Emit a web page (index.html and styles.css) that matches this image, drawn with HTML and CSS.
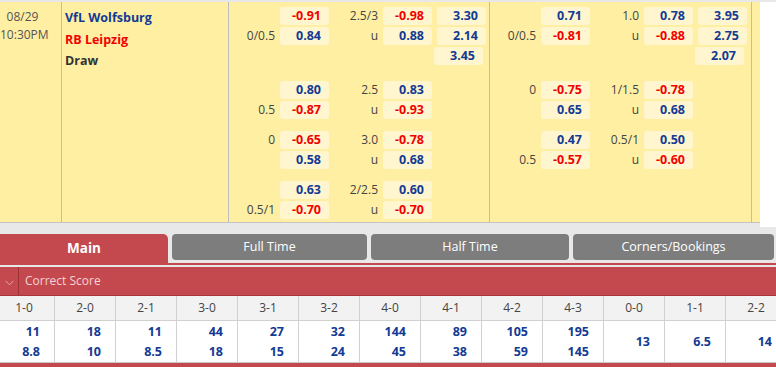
FILE: index.html
```html
<!DOCTYPE html>
<html>
<head>
<meta charset="utf-8">
<link rel="stylesheet" href="styles.css">
</head>
<body>
<div class="page">
  <div class="top">
    <div class="match">
      <div class="col date">
        <div>08/29</div>
        <div>10:30PM</div>
      </div>
      <div class="col teams">
        <div class="home">VfL Wolfsburg</div>
        <div class="away">RB Leipzig</div>
        <div class="draw">Draw</div>
      </div>
      <div class="col odds">
        <div class="grp g1">
          <div class="line"><span class="hl"></span><span class="bx r">-0.91</span><span class="hl">2.5/3</span><span class="bx r">-0.98</span><span class="bx b x">3.30</span></div>
          <div class="line"><span class="hl">0/0.5</span><span class="bx b">0.84</span><span class="hl">u</span><span class="bx b">0.88</span><span class="bx b x">2.14</span></div>
          <div class="line"><span class="hl"></span><span class="no"></span><span class="hl"></span><span class="no"></span><span class="bx b x">3.45</span></div>
        </div>
        <div class="grp">
          <div class="line"><span class="hl"></span><span class="bx b">0.80</span><span class="hl">2.5</span><span class="bx b">0.83</span></div>
          <div class="line"><span class="hl">0.5</span><span class="bx r">-0.87</span><span class="hl">u</span><span class="bx r">-0.93</span></div>
        </div>
        <div class="grp">
          <div class="line"><span class="hl">0</span><span class="bx r">-0.65</span><span class="hl">3.0</span><span class="bx r">-0.78</span></div>
          <div class="line"><span class="hl"></span><span class="bx b">0.58</span><span class="hl">u</span><span class="bx b">0.68</span></div>
        </div>
        <div class="grp">
          <div class="line"><span class="hl"></span><span class="bx b">0.63</span><span class="hl">2/2.5</span><span class="bx b">0.60</span></div>
          <div class="line"><span class="hl">0.5/1</span><span class="bx r">-0.70</span><span class="hl">u</span><span class="bx r">-0.70</span></div>
        </div>
      </div>
      <div class="col odds ht">
        <div class="grp g1">
          <div class="line"><span class="hl"></span><span class="bx b">0.71</span><span class="hl">1.0</span><span class="bx b">0.78</span><span class="bx b x">3.95</span></div>
          <div class="line"><span class="hl">0/0.5</span><span class="bx r">-0.81</span><span class="hl">u</span><span class="bx r">-0.88</span><span class="bx b x">2.75</span></div>
          <div class="line"><span class="hl"></span><span class="no"></span><span class="hl"></span><span class="no"></span><span class="bx b x">2.07</span></div>
        </div>
        <div class="grp">
          <div class="line"><span class="hl">0</span><span class="bx r">-0.75</span><span class="hl">1/1.5</span><span class="bx r">-0.78</span></div>
          <div class="line"><span class="hl"></span><span class="bx b">0.65</span><span class="hl">u</span><span class="bx b">0.68</span></div>
        </div>
        <div class="grp">
          <div class="line"><span class="hl"></span><span class="bx b">0.47</span><span class="hl">0.5/1</span><span class="bx b">0.50</span></div>
          <div class="line"><span class="hl">0.5</span><span class="bx r">-0.57</span><span class="hl">u</span><span class="bx r">-0.60</span></div>
        </div>
      </div>
      <div class="col extra"></div>
    </div>
    <div class="side"></div>
  </div>

  <div class="tabs">
    <div class="tab active">Main</div>
    <div class="tab t2">Full Time</div>
    <div class="tab t3">Half Time</div>
    <div class="tab t4">Corners/Bookings</div>
  </div>

  <div class="sec-head">
    <span class="chev"><svg width="9" height="6" viewBox="0 0 9 6"><path d="M0.5 0.8 L4.5 4.8 L8.5 0.8" fill="none" stroke="#e7a6aa" stroke-width="1"/></svg></span>
    <span class="sec-title">Correct Score</span>
  </div>

  <div class="scores">
    <div class="sc"><div class="sh">1-0</div><div class="sv"><span>11</span><span>8.8</span></div></div>
    <div class="sc"><div class="sh">2-0</div><div class="sv"><span>18</span><span>10</span></div></div>
    <div class="sc"><div class="sh">2-1</div><div class="sv"><span>11</span><span>8.5</span></div></div>
    <div class="sc"><div class="sh">3-0</div><div class="sv"><span>44</span><span>18</span></div></div>
    <div class="sc"><div class="sh">3-1</div><div class="sv"><span>27</span><span>15</span></div></div>
    <div class="sc"><div class="sh">3-2</div><div class="sv"><span>32</span><span>24</span></div></div>
    <div class="sc"><div class="sh">4-0</div><div class="sv"><span>144</span><span>45</span></div></div>
    <div class="sc"><div class="sh">4-1</div><div class="sv"><span>89</span><span>38</span></div></div>
    <div class="sc"><div class="sh">4-2</div><div class="sv"><span>105</span><span>59</span></div></div>
    <div class="sc"><div class="sh">4-3</div><div class="sv"><span>195</span><span>145</span></div></div>
    <div class="sc"><div class="sh">0-0</div><div class="sv one"><span>13</span></div></div>
    <div class="sc"><div class="sh">1-1</div><div class="sv one"><span>6.5</span></div></div>
    <div class="sc"><div class="sh">2-2</div><div class="sv one"><span>14</span></div></div>
  </div>
  <div class="next-head"></div>
</div>
</body>
</html>
```

FILE: styles.css
```css
html, body {
  margin: 0;
  padding: 0;
}
body {
  background: #e8e8e8;
  font-family: "Open Sans", "Liberation Sans", sans-serif;
  width: 776px;
  height: 367px;
  overflow: hidden;
}
.page {
  padding-top: 2px;
}
.top {
  display: flex;
  height: 221px;
}
.match {
  display: flex;
  width: 760px;
  background: #ffefa3;
  border-bottom: 1px solid #c4c4c4;
}
.side {
  width: 16px;
  height: 225px;
  background: #ffffff;
}
.col {
  border-right: 1px solid #bdbdbd;
  box-sizing: border-box;
}
.date {
  width: 62px;
  padding: 6px 16px 0 0;
  text-align: center;
  font-size: 12px;
  line-height: 18px;
  color: #555;
}
.teams {
  width: 167px;
  padding: 5px 0 0 3px;
  font-size: 12.5px;
  font-weight: 700;
  line-height: 21.5px;
}
.home { color: #133a94; }
.away { color: #f20000; }
.draw { color: #333333; }
.odds {
  width: 261px;
}
.ht {
  width: 262px;
}
.extra {
  flex: 1;
  border-right: none;
}
.grp {
  display: flex;
  flex-direction: column;
  gap: 2px;
  padding: 6px 0;
}
.grp.g1 {
  height: 73px;
  padding-top: 5px;
  box-sizing: border-box;
}
.line {
  display: flex;
  height: 18px;
}
.hl {
  width: 51px;
  box-sizing: border-box;
  padding-right: 5px;
  text-align: right;
  font-size: 12px;
  line-height: 18px;
  color: #444;
}
.hl + .bx + .hl {
  width: 54px;
}
.bx, .no {
  width: 49px;
  height: 18px;
  box-sizing: border-box;
  border-radius: 3px;
  padding-right: 8px;
  text-align: right;
  font-size: 12.5px;
  font-weight: 700;
  line-height: 18px;
}
.bx {
  background: #fff6cf;
}
.bx.x {
  margin-left: 5px;
}
.bx.r { color: #f20000; }
.bx.b { color: #133a94; }

.tabs {
  display: flex;
  align-items: flex-start;
  gap: 4px;
  margin-top: 11px;
  height: 29px;
  border-bottom: 2px solid #c4494f;
}
.tab {
  height: 26px;
  line-height: 26px;
  text-align: center;
  color: #ffffff;
  background: #7d7d7d;
  border-radius: 4px;
  font-size: 12.5px;
}
.tab.active {
  width: 168px;
  height: 29px;
  line-height: 29px;
  background: #c4494f;
  border-radius: 0 5px 0 0;
  font-weight: 700;
  font-size: 13.5px;
}
.t2 { width: 195px; }
.t3 { width: 198px; }
.t4 { width: 201px; }

.sec-head {
  margin-top: 2px;
  display: flex;
  align-items: stretch;
  height: 29px;
  background: #c4494f;
  border-bottom: 1px solid #a8363c;
  box-sizing: border-box;
}
.chev {
  width: 19px;
  border-right: 1px solid #9e3036;
  display: flex;
  align-items: center;
  justify-content: center;
  padding-top: 3px;
  box-sizing: border-box;
}
.sec-title {
  padding-left: 6px;
  line-height: 28px;
  font-size: 12px;
  color: #f4d3d4;
}

.scores {
  display: flex;
  margin-left: -6px;
  border-bottom: 1px solid #c9c9c9;
}
.sc {
  width: 61px;
  flex: none;
  border-right: 1px solid #d0d0d0;
  box-sizing: border-box;
}
.sh {
  height: 24px;
  line-height: 24px;
  text-align: center;
  background: #f2f2f2;
  border-bottom: 1px solid #d0d0d0;
  font-size: 12px;
  color: #444;
}
.sv {
  height: 41px;
  background: #ffffff;
  display: flex;
  flex-direction: column;
  justify-content: center;
  align-items: flex-end;
  padding-right: 14px;
  font-size: 12.5px;
  font-weight: 700;
  color: #133a94;
  line-height: 20px;
}
.next-head {
  height: 6px;
  background: #c4494f;
}
```
